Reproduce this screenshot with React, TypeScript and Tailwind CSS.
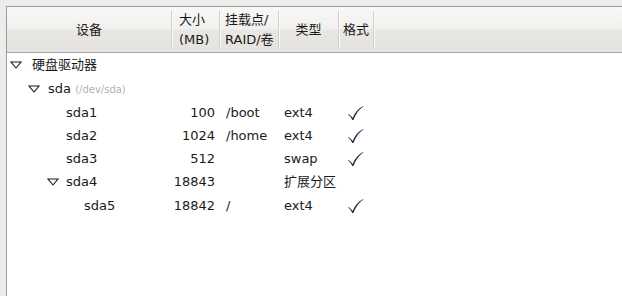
import React from "react";

const font = { fontFamily: '"DejaVu Sans", "Noto Sans CJK SC", sans-serif' };

function Tri() {
  return (
    <svg width="12" height="8" viewBox="0 0 12 8" className="shrink-0">
      <path d="M1 1 L11 1 L6 7 Z" fill="none" stroke="#1a1a1a" strokeWidth="1.1" strokeLinejoin="miter" />
    </svg>
  );
}

function Check() {
  return (
    <svg width="17" height="16" viewBox="0 0 17 16">
      <path
        d="M1 9.2 C2.8 9.4 4.2 10.8 5.6 13 C7.8 7.8 11 3.6 16.2 1 L16.4 1.6 C12 4.6 8.8 9 6.4 15 L5.2 15 C4.2 12.4 2.8 10.6 1 9.8 Z"
        fill="#2a2a4a"
      />
    </svg>
  );
}

type Row = {
  h: string;
  indent: string;
  tri?: boolean;
  name: React.ReactNode;
  size?: string;
  mount?: string;
  type?: string;
  check?: boolean;
};

const rows: Row[] = [
  { h: "h-[23px]", indent: "pl-[3px]", tri: true, name: <span className="ml-[10px]">硬盘驱动器</span> },
  {
    h: "h-[25px]",
    indent: "pl-[21px]",
    tri: true,
    name: (
      <span className="ml-[8px]">
        sda <span className="text-[10px] text-[#b0b0b0]">(/dev/sda)</span>
      </span>
    ),
  },
  { h: "h-[23px]", indent: "pl-[59px]", name: "sda1", size: "100", mount: "/boot", type: "ext4", check: true },
  { h: "h-[23px]", indent: "pl-[59px]", name: "sda2", size: "1024", mount: "/home", type: "ext4", check: true },
  { h: "h-[23px]", indent: "pl-[59px]", name: "sda3", size: "512", mount: "", type: "swap", check: true },
  { h: "h-[24px]", indent: "pl-[40px]", tri: true, name: <span className="ml-[7px]">sda4</span>, size: "18843", mount: "", type: "扩展分区" },
  { h: "h-[24px]", indent: "pl-[77px]", name: "sda5", size: "18842", mount: "/", type: "ext4", check: true },
];

function Sep() {
  return <div className="w-px h-[37px] bg-[#cfcecb] shadow-[1px_0_0_#fafaf9]" />;
}

export default function App() {
  return (
    <div className="w-[622px] h-[296px] bg-[#edeceb] overflow-hidden text-[13px] text-[#1a1a1a]" style={font}>
      <div className="h-[6px]" />
      <div className="flex h-[290px]">
        <div className="w-[6px] shrink-0" />
        <div className="flex-1 flex flex-col border-l border-t border-[#9a9a9a] bg-white">
          <div
            className="h-[46px] flex items-center border-b border-[#a5a5a3] shrink-0"
            style={{ background: "linear-gradient(#f8f8f6 0%, #f1f0ee 48%, #e8e7e4 52%, #e4e3e0 100%)" }}
          >
            <div className="w-[164px] flex items-center justify-center">设备</div>
            <Sep />
            <div className="w-[47px] pl-[7px] leading-[20px]">
              <div>大小</div>
              <div>(MB)</div>
            </div>
            <Sep />
            <div className="w-[58px] pl-[5px] leading-[20px] whitespace-nowrap">
              <div>挂载点/</div>
              <div>RAID/卷</div>
            </div>
            <Sep />
            <div className="w-[59px] flex justify-center">类型</div>
            <Sep />
            <div className="w-[34px] flex justify-center">格式</div>
            <Sep />
          </div>
          <div className="flex flex-col">
            {rows.map((r, i) => (
              <div key={i} className={`flex items-center whitespace-nowrap ${r.h}`}>
                <div className={`w-[165px] shrink-0 flex items-center ${r.indent}`}>
                  {r.tri && <Tri />}
                  <span>{r.name}</span>
                </div>
                <div className="w-[43px] shrink-0 text-right">{r.size}</div>
                <div className="w-[59px] shrink-0 pl-[11px]">{r.mount}</div>
                <div className="w-[60px] shrink-0 pl-[10px]">{r.type}</div>
                <div className="w-[35px] shrink-0 pl-[13px] flex items-center">{r.check && <Check />}</div>
              </div>
            ))}
          </div>
        </div>
      </div>
    </div>
  );
}
